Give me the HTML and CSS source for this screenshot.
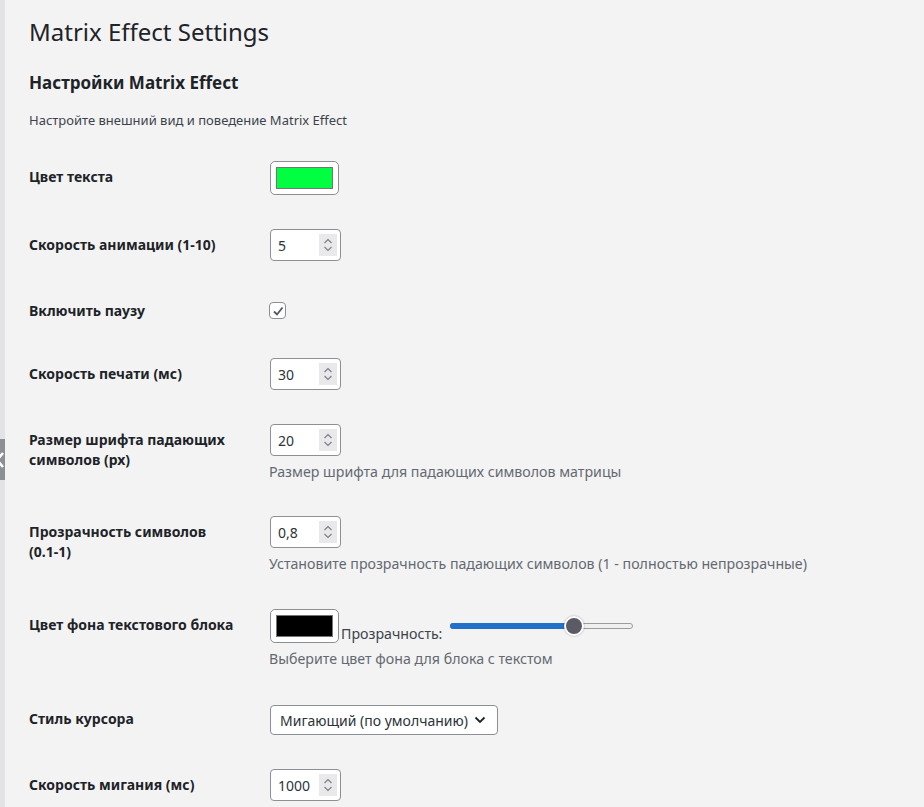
FILE: index.html
```html
<!DOCTYPE html>
<html lang="ru">
<head>
<meta charset="utf-8">
<title>Matrix Effect Settings</title>
<link rel="stylesheet" href="styles.css">
</head>
<body>
<div class="edge"><span class="edge-handle"><svg width="10" height="20" viewBox="0 0 10 20"><path d="M8 3 L2 10 L8 17" fill="none" stroke="#fff" stroke-width="2.5"/></svg></span></div>
<div class="wrap">
  <h1 class="page-title">Matrix Effect Settings</h1>
  <h2 class="section-title">Настройки Matrix Effect</h2>
  <p class="section-desc">Настройте внешний вид и поведение Matrix Effect</p>

  <div class="form">
    <div class="row r-color">
      <div class="label">Цвет текста</div>
      <div class="field"><span class="color-input"><span class="swatch green"></span></span></div>
    </div>
    <div class="row">
      <div class="label">Скорость анимации (1-10)</div>
      <div class="field"><span class="num">5<span class="spin"><svg width="10" height="16" viewBox="0 0 10 16"><path d="M1.5 6 L5 2.5 L8.5 6 M1.5 10 L5 13.5 L8.5 10" fill="none" stroke="#7a7d82" stroke-width="1.1"/></svg></span></span></div>
    </div>
    <div class="row r-check">
      <div class="label">Включить паузу</div>
      <div class="field"><span class="check"><svg width="12" height="12" viewBox="0 0 12 12"><path d="M2 6.5 L5 9.5 L10.5 2.5" fill="none" stroke="#50575e" stroke-width="1.8"/></svg></span></div>
    </div>
    <div class="row">
      <div class="label">Скорость печати (мс)</div>
      <div class="field"><span class="num">30<span class="spin"><svg width="10" height="16" viewBox="0 0 10 16"><path d="M1.5 6 L5 2.5 L8.5 6 M1.5 10 L5 13.5 L8.5 10" fill="none" stroke="#7a7d82" stroke-width="1.1"/></svg></span></span></div>
    </div>
    <div class="row">
      <div class="label">Размер шрифта падающих символов (px)</div>
      <div class="field"><span class="num">20<span class="spin"><svg width="10" height="16" viewBox="0 0 10 16"><path d="M1.5 6 L5 2.5 L8.5 6 M1.5 10 L5 13.5 L8.5 10" fill="none" stroke="#7a7d82" stroke-width="1.1"/></svg></span></span>
        <p class="desc">Размер шрифта для падающих символов матрицы</p></div>
    </div>
    <div class="row r-opacity">
      <div class="label">Прозрачность символов <span class="nw">(0.1-1)</span></div>
      <div class="field"><span class="num">0,8<span class="spin"><svg width="10" height="16" viewBox="0 0 10 16"><path d="M1.5 6 L5 2.5 L8.5 6 M1.5 10 L5 13.5 L8.5 10" fill="none" stroke="#7a7d82" stroke-width="1.1"/></svg></span></span>
        <p class="desc">Установите прозрачность падающих символов (1 - полностью непрозрачные)</p></div>
    </div>
    <div class="row r-bg">
      <div class="label">Цвет фона текстового блока</div>
      <div class="field">
        <div class="bg-line"><span class="color-input"><span class="swatch black"></span></span><span class="opacity-label">Прозрачность:</span><span class="range"><span class="range-fill"></span><span class="range-thumb"></span></span></div>
        <p class="desc">Выберите цвет фона для блока с текстом</p></div>
    </div>
    <div class="row r-select">
      <div class="label">Стиль курсора</div>
      <div class="field"><span class="select">Мигающий (по умолчанию)<svg width="12" height="8" viewBox="0 0 12 8"><path d="M1.5 1.5 L6 6 L10.5 1.5" fill="none" stroke="#1d2327" stroke-width="1.8"/></svg></span></div>
    </div>
    <div class="row">
      <div class="label">Скорость мигания (мс)</div>
      <div class="field"><span class="num">1000<span class="spin"><svg width="10" height="16" viewBox="0 0 10 16"><path d="M1.5 6 L5 2.5 L8.5 6 M1.5 10 L5 13.5 L8.5 10" fill="none" stroke="#7a7d82" stroke-width="1.1"/></svg></span></span></div>
    </div>
  </div>
</div>
</body>
</html>
```
FILE: styles.css
```css
* { box-sizing: border-box; }
html, body { margin: 0; padding: 0; }
body {
  background: #f3f3f4;
  font-family: "Noto Sans", "Open Sans", sans-serif;
  color: #1d2327;
  display: flex;
  min-height: 807px;
  overflow: hidden;
}
.edge {
  width: 5px;
  background: #e3e3e5;
  flex: none;
  position: relative;
}
.edge-handle {
  position: absolute;
  left: -5px;
  top: 439px;
  width: 10px;
  height: 41px;
  background: #8c8f94;
  display: flex;
  align-items: center;
  justify-content: center;
}
.wrap {
  padding-left: 24px;
  flex: 1;
}
.page-title {
  font-size: 24px;
  font-weight: 400;
  margin: 17px 0 0;
  line-height: 30px;
}
.section-title {
  font-size: 17px;
  font-weight: 700;
  margin: 24px 0 0;
  line-height: 24px;
}
.section-desc {
  font-size: 13px;
  margin: 15px 0 0;
  line-height: 20px;
  color: #3c434a;
}
.form { margin-top: 14px; }
.row {
  display: grid;
  grid-template-columns: 241px 1fr;
  padding: 17px 0;
}
.label {
  font-size: 14px;
  font-weight: 700;
  line-height: 20px;
  padding-top: 6px;
  padding-right: 30px;
}
.nw { white-space: nowrap; }
.field { font-size: 14px; }
.color-input {
  display: inline-flex;
  width: 69px;
  height: 34px;
  background: #fff;
  border: 1px solid #8c8f94;
  border-radius: 5px;
  padding: 5px;
  vertical-align: bottom;
}
.swatch { flex: 1; border: 1px solid #757575; }
.swatch.green { background: #00ff40; }
.swatch.black { background: #000; }
.num {
  display: inline-flex;
  align-items: center;
  width: 71px;
  height: 32px;
  background: #fff;
  border: 1px solid #8c8f94;
  border-radius: 4px;
  padding-left: 7px;
  font-size: 14px;
  color: #2c3338;
  position: relative;
}
.spin {
  position: absolute;
  right: 3px;
  top: 4px;
  width: 18px;
  height: 22px;
  background: #e9e9ec;
  display: flex;
  align-items: center;
  justify-content: center;
}
.check {
  display: inline-flex;
  width: 17px;
  height: 17px;
  margin-top: 7px;
  margin-left: -1px;
  border: 1px solid #8c8f94;
  border-radius: 4px;
  background: #fff;
  align-items: center;
  justify-content: center;
}
.r-check .field { height: 29px; }
.desc {
  margin: 6px 0 0 -1px;
  font-size: 14.2px;
  line-height: 20px;
  color: #646970;
}
.r-opacity { padding-bottom: 18px; }
.r-bg { padding-bottom: 19px; }
.bg-line { display: flex; align-items: flex-end; height: 34px; }
.opacity-label { font-size: 14.2px; color: #3c434a; line-height: 18px; margin-left: 2px; }
.range {
  position: relative;
  width: 183px;
  height: 6px;
  margin-left: 8px;
  align-self: flex-start;
  margin-top: 14px;
  border: 1px solid #9a9ca0;
  border-radius: 3px;
  background: #f0f0f1;
}
.range-fill {
  position: absolute;
  left: -1px; top: -1px;
  width: 124px; height: 6px;
  border-radius: 3px;
  background: #2271c9;
}
.range-thumb {
  position: absolute;
  left: 113px;
  top: -8px;
  width: 20px;
  height: 20px;
  border-radius: 50%;
  background: #5b5b66;
  border: 2px solid #fff;
  box-shadow: 0 0 2px rgba(0,0,0,.35);
}
.select {
  display: inline-flex;
  align-items: center;
  gap: 6px;
  height: 30px;
  width: 228px;
  background: #fff;
  border: 1px solid #8c8f94;
  border-radius: 4px;
  padding-left: 9px;
  font-size: 14px;
  color: #2c3338;
}
.r-select .label { padding-top: 4px; }
```
